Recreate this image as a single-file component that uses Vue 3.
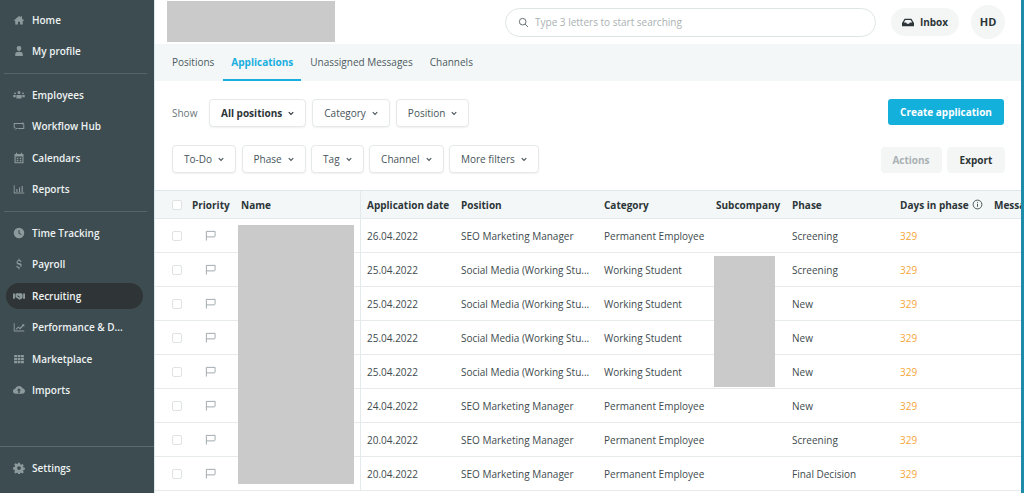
<script setup>
const topNav = [
  { label: 'Home', icon: 'home' },
  { label: 'My profile', icon: 'user' }
]
const midNav = [
  { label: 'Employees', icon: 'people' },
  { label: 'Workflow Hub', icon: 'hub' },
  { label: 'Calendars', icon: 'calendar' },
  { label: 'Reports', icon: 'chart' }
]
const lowNav = [
  { label: 'Time Tracking', icon: 'clock' },
  { label: 'Payroll', icon: 'dollar' },
  { label: 'Recruiting', icon: 'shake', active: true },
  { label: 'Performance & D...', icon: 'perf' },
  { label: 'Marketplace', icon: 'grid' },
  { label: 'Imports', icon: 'cloud' }
]
const tabs = ['Positions', 'Applications', 'Unassigned Messages', 'Channels']
const showFilters = ['All positions', 'Category', 'Position']
const moreFilters = ['To-Do', 'Phase', 'Tag', 'Channel', 'More filters']

const seo = 'SEO Marketing Manager'
const social = 'Social Media (Working Stu...'
const perm = 'Permanent Employee'
const student = 'Working Student'
const rows = [
  { date: '26.04.2022', position: seo, category: perm, phase: 'Screening' },
  { date: '25.04.2022', position: social, category: student, phase: 'Screening' },
  { date: '25.04.2022', position: social, category: student, phase: 'New' },
  { date: '25.04.2022', position: social, category: student, phase: 'New' },
  { date: '25.04.2022', position: social, category: student, phase: 'New' },
  { date: '24.04.2022', position: seo, category: perm, phase: 'New' },
  { date: '20.04.2022', position: seo, category: perm, phase: 'Screening' },
  { date: '20.04.2022', position: seo, category: perm, phase: 'Final Decision' }
]
</script>

<template>
  <div class="page">
    <aside class="sidebar">
      <div class="nav-scroll">
        <template v-for="(group, i) in [topNav, midNav, lowNav]" :key="i">
          <div class="nav-group" :class="{ first: i === 0 }">
            <div v-for="item in group" :key="item.label" class="nav-item" :class="{ active: item.active }">
              <svg class="nav-icon" viewBox="0 0 16 16" fill="currentColor">
                <path v-if="item.icon === 'home'" d="M8 2.500 1 8.500l.8.800L3 8.300V14h3.600v-3.600h2.800V14H13V8.300l1.200 1 .8-.8-3-2.600V3h-1.800v1.400z" />
                <path v-else-if="item.icon === 'user'" d="M8 1.500a3 3 0 0 1 3 3.200C11 6.600 9.700 8 8 8S5 6.600 5 4.700A3 3 0 0 1 8 1.500zM3 14.500v-2.600C3 10 5 9 8 9s5 1 5 2.900v2.600z" />
                <path v-else-if="item.icon === 'people'" d="M8 2.500a2 2 0 1 1 0 4 2 2 0 0 1 0-4zM4.500 8h7v4.500h-7zM2.700 4.500a1.300 1.300 0 1 1 0 2.600 1.300 1.300 0 0 1 0-2.600zM13.300 4.500a1.300 1.300 0 1 1 0 2.600 1.300 1.300 0 0 1 0-2.600zM.3 8h3.300v3H.3zM12.400 8h3.300v3h-3.300z" />
                <path v-else-if="item.icon === 'hub'" d="M1 4h12v1.300H2.300v5.400H6V12H1zM15 12H6.800v-1.300h6.900V5.500H15zM12.500 2.800 15 4.600l-2.500 1.800zM3.500 9.600 1 11.400l2.500 1.800z" />
                <path v-else-if="item.icon === 'calendar'" fill-rule="evenodd" d="M4 1h1.500v1.500h5V1H12v1.500h2V15H2V2.500h2zM3.500 6v7.500h9V6zM5 7.500h2v2H5zM9 7.500h2v2H9zM5 10.500h2v2H5zM9 10.500h2v2H9z" />
                <path v-else-if="item.icon === 'chart'" d="M1 3h1.200v9.800H15V14H1zM4.500 8H6v4H4.500zM8 6h1.500v6H8zM11.500 4H13v8h-1.500z" />
                <path v-else-if="item.icon === 'clock'" fill-rule="evenodd" d="M8 1a7 7 0 1 1 0 14A7 7 0 0 1 8 1zM7.300 4v4.600l3.400 2 .7-1.100-2.700-1.600V4z" />
                <path v-else-if="item.icon === 'dollar'" d="M7.300 1h1.400v1.600c1.400.2 2.500 1 2.800 2.400l-1.500.3c-.2-.8-.9-1.300-1.900-1.300-1.200 0-1.900.5-1.900 1.300 0 .8.700 1.100 2 1.400 1.800.4 3.400 1 3.400 2.900 0 1.500-1.100 2.500-2.900 2.700V15H7.300v-1.700c-1.600-.2-2.800-1.100-3.100-2.600l1.500-.3c.3 1 1.100 1.500 2.300 1.500 1.300 0 2.100-.5 2.100-1.400 0-.9-.8-1.200-2.100-1.500C6.300 8.600 4.700 8 4.700 6.100c0-1.800 1.100-3.100 2.600-3.500z" />
                <path v-else-if="item.icon === 'shake'" d="M0 4.500h2.500v7H0zM13.500 4.500H16v7h-2.500zM3.300 5.200 6 4l2 .8L10 4l2.700 1.200v5.300L9 13l-1.300-.6-3-2.200-1.400-.5zM6.500 7 5.700 8l2.800 2.200.8-.8z" />
                <path v-else-if="item.icon === 'perf'" d="M1 3h1.200v9.800H15V14H1zM3.500 10.600 7 7.400l2.200 1.700 3.500-3.700-1-1h3.300v3.300l-1.100-1.100-4.600 4.800L7 9.100l-2.600 2.400z" />
                <path v-else-if="item.icon === 'grid'" d="M1.500 2.500h3.800v3.200H1.500zM6.100 2.500h3.800v3.200H6.100zM10.700 2.500h3.800v3.200h-3.800zM1.500 6.500h3.800v3.200H1.500zM6.100 6.500h3.800v3.200H6.100zM10.700 6.500h3.800v3.200h-3.800zM1.500 10.500h3.800v3.200H1.500zM6.100 10.500h3.800v3.200H6.100zM10.700 10.500h3.800v3.200h-3.800z" />
                <path v-else-if="item.icon === 'cloud'" fill-rule="evenodd" d="M8.500 2.500c2 0 3.600 1.300 4 3.200 2 .2 3.500 1.700 3.500 3.700 0 2.200-1.700 3.600-3.800 3.600H3.500C1.500 13 0 11.600 0 9.600c0-1.800 1.200-3.100 2.900-3.400.6-2.200 2.900-3.700 5.600-3.700zM8 5.500 5 8.800h2V12h2V8.800h2z" />
              </svg>
              <span>{{ item.label }}</span>
            </div>
          </div>
        </template>
      </div>
      <div class="nav-bottom">
        <div class="nav-item">
          <svg class="nav-icon" viewBox="0 0 16 16" fill="currentColor" fill-rule="evenodd">
            <path d="M6.800 1h2.400l.4 2 1.300.6 1.800-1.100 1.700 1.700-1.100 1.800.6 1.300 2 .4v2.400l-2 .4-.6 1.300 1.100 1.800-1.700 1.700-1.800-1.100-1.300.6-.4 2H6.800l-.4-2-1.300-.6-1.800 1.100-1.700-1.700 1.100-1.800-.6-1.300-2-.4V6.900l2-.4.6-1.300-1.100-1.800 1.700-1.700 1.800 1.100 1.300-.6zM8 5.500a2.500 2.500 0 1 0 0 5 2.500 2.500 0 0 0 0-5z" />
          </svg>
          <span>Settings</span>
        </div>
      </div>
    </aside>

    <main class="main">
      <header class="topbar">
        <div class="logo-mask"></div>
        <div class="search">
          <svg class="search-icon" viewBox="0 0 16 16" fill="none" stroke="currentColor" stroke-width="1.400">
            <circle cx="6.800" cy="6.800" r="4.800" />
            <path d="m10.300 10.300 4.200 4.200" />
          </svg>
          <span>Type 3 letters to start searching</span>
        </div>
        <button class="inbox">
          <svg viewBox="0 0 16 12" fill="currentColor" width="12" height="9">
            <path d="M3.500 1h9L16 6.500V11H0V6.500zM4.500 2.500 2.300 6H5.500l1 1.500h3l1-1.500h3.200l-2.200-3.500z" fill-rule="evenodd" />
          </svg>
          Inbox
        </button>
        <div class="avatar">HD</div>
      </header>

      <nav class="tabs">
        <span v-for="tab in tabs" :key="tab" class="tab" :class="{ current: tab === 'Applications' }">{{ tab }}</span>
      </nav>

      <section class="filters">
        <div class="filter-row first">
          <span class="show">Show</span>
          <button v-for="f in showFilters" :key="f" class="select" :class="{ strong: f === 'All positions' }">
            {{ f }}
            <svg class="chev" viewBox="0 0 8 6" fill="none" stroke="currentColor" stroke-width="1.500"><path d="m1 1.300 3 3 3-3" /></svg>
          </button>
          <button class="create">Create application</button>
        </div>
        <div class="filter-row second">
          <button v-for="f in moreFilters" :key="f" class="select">
            {{ f }}
            <svg class="chev" viewBox="0 0 8 6" fill="none" stroke="currentColor" stroke-width="1.500"><path d="m1 1.300 3 3 3-3" /></svg>
          </button>
          <button class="ghost disabled">Actions</button>
          <button class="ghost export">Export</button>
        </div>
      </section>

      <section class="table">
        <div class="row head">
          <div class="cell check"><i class="box"></i></div>
          <div class="cell priority">Priority</div>
          <div class="cell name">Name</div>
          <div class="cell date">Application date</div>
          <div class="cell position">Position</div>
          <div class="cell category">Category</div>
          <div class="cell sub">Subcompany</div>
          <div class="cell phase">Phase</div>
          <div class="cell days">
            Days in phase
            <svg class="info" viewBox="0 0 12 12" fill="none" stroke="currentColor"><circle cx="6" cy="6" r="4.800" /><path d="M6 5.200v3.300M6 3.200v1" /></svg>
          </div>
          <div class="cell msg">Messages</div>
        </div>
        <div v-for="(row, i) in rows" :key="i" class="row">
          <div class="cell check"><i class="box"></i></div>
          <div class="cell priority">
            <svg class="flag" viewBox="0 0 12 12" fill="none" stroke="currentColor"><path d="M1.500 11.500V1.500h9.500v5c0 .6-.4 1-1 1H1.500" /></svg>
          </div>
          <div class="cell name"></div>
          <div class="cell date">{{ row.date }}</div>
          <div class="cell position">{{ row.position }}</div>
          <div class="cell category">{{ row.category }}</div>
          <div class="cell sub"></div>
          <div class="cell phase">{{ row.phase }}</div>
          <div class="cell days count">329</div>
          <div class="cell msg"></div>
        </div>
        <div class="mask mask-name"></div>
        <div class="mask mask-sub"></div>
      </section>
    </main>
  </div>
</template>

<style>
html, body {
  margin: 0;
  overflow: hidden;
  background: #fff;
}
</style>

<style scoped>
.page {
  display: flex;
  width: 1024px;
  height: 493px;
  overflow: hidden;
  font-family: "Open Sans", "Noto Sans", sans-serif;
  font-size: 10px;
  color: #3e4a4e;
}

.sidebar {
  width: 155px;
  flex: none;
  display: flex;
  flex-direction: column;
  justify-content: space-between;
  background: #3c4c50;
  border-right: 1px solid #d9e9ee;
  box-sizing: border-box;
}

.nav-group {
  display: flex;
  flex-direction: column;
  margin: 0 7px 0 4px;
  padding: 8px 0 3.300px;
  border-bottom: 1px solid #556569;
}

.nav-group.first {
  padding-top: 7px;
}

.nav-group:last-child {
  border-bottom: 0;
}

.nav-item {
  height: 26px;
  margin-bottom: 5.400px;
  display: flex;
  align-items: center;
  gap: 7px;
  padding-left: 9px;
  border-radius: 13px;
  color: #eef2f3;
  font-weight: 600;
}

.nav-item .nav-icon {
  width: 12px;
  height: 12px;
  flex: none;
  color: #8d9a9d;
}

.nav-item.active {
  background: #2f3536;
  margin: 0 4px 5.400px 2px;
  padding-left: 7px;
}

.nav-bottom {
  border-top: 1px solid #5a6a6e;
  padding: 8px 7px 12px 4px;
}

.nav-bottom .nav-item {
  margin-bottom: 0;
}

.main {
  flex: 1;
  min-width: 0;
  display: flex;
  flex-direction: column;
  border-right: 3px solid #1f8bab;
}

.topbar {
  height: 44px;
  flex: none;
  display: flex;
  align-items: center;
  padding-left: 12px;
  background: #fff;
}

.logo-mask {
  width: 168px;
  height: 41px;
  margin-top: 1px;
  background: #cacaca;
  align-self: flex-start;
}

.search {
  margin-left: 170px;
  width: 371px;
  height: 29px;
  box-sizing: border-box;
  border: 1px solid #dfe4e5;
  border-radius: 15px;
  display: flex;
  align-items: center;
  gap: 6px;
  padding-left: 12px;
  color: #a9b1b3;
}

.search-icon {
  width: 11px;
  height: 11px;
  color: #5f6b6e;
}

.inbox {
  margin-left: 15px;
  width: 68px;
  height: 28px;
  border: 0;
  border-radius: 14px;
  background: #f4f6f6;
  font: 700 10px "Open Sans", sans-serif;
  color: #2c3537;
  display: flex;
  align-items: center;
  justify-content: center;
  gap: 6px;
  padding: 0;
}

.avatar {
  margin-left: 12px;
  width: 34px;
  height: 34px;
  box-sizing: border-box;
  padding-bottom: 2px;
  border-radius: 50%;
  background: #f4f6f6;
  font-weight: 700;
  font-size: 11px;
  color: #2c3537;
  display: flex;
  align-items: center;
  justify-content: center;
}

.tabs {
  height: 37px;
  flex: none;
  display: flex;
  gap: 1px;
  background: #f3f7f8;
  padding-left: 9px;
  box-sizing: border-box;
}

.tab {
  padding: 0 8px;
  display: flex;
  align-items: center;
  color: #4d5a5e;
  border-bottom: 2px solid transparent;
  box-sizing: border-box;
}

.tab.current {
  color: #19aede;
  font-weight: 700;
  border-bottom-color: #19aede;
}

.filters {
  height: 109px;
  flex: none;
  padding: 18px 17px 0 17px;
  box-sizing: border-box;
}

.filter-row {
  display: flex;
  align-items: center;
  gap: 6px;
}

.filter-row.second {
  margin-top: 18px;
  gap: 5.500px;
}

.show {
  color: #6b7679;
  margin-right: 6px;
  width: 25px;
}

.select {
  height: 28px;
  padding: 0 11px;
  border: 1px solid #e6e9ea;
  border-radius: 4px;
  background: #fff;
  box-shadow: 0 1px 2px rgba(0, 0, 0, 0.06);
  font: 400 10px "Open Sans", sans-serif;
  color: #47545a;
  display: flex;
  align-items: center;
  gap: 6px;
}

.select.strong {
  font-weight: 700;
  color: #2c3537;
}

.chev {
  width: 6px;
  height: 5px;
}

.create {
  margin-left: auto;
  align-self: flex-start;
  width: 116px;
  height: 26px;
  border: 0;
  border-radius: 3px;
  background: #14b0dc;
  color: #fff;
  font: 700 10px "Open Sans", sans-serif;
  padding: 0;
}

.ghost {
  width: 58px;
  height: 26px;
  align-self: flex-end;
  border: 0;
  border-radius: 4px;
  background: #f4f6f6;
  color: #2c3537;
  font: 700 10px "Open Sans", sans-serif;
  padding: 0;
}

.ghost.disabled {
  margin-left: auto;
  width: 61px;
  color: #a9b1b3;
}

.ghost.export {
  margin-right: -1px;
}

.table {
  position: relative;
  flex: 1;
  min-height: 0;
  overflow: hidden;
  border-top: 1px solid #dfe7ea;
}

.row {
  display: grid;
  grid-template-columns: 37px 49px 120px 100px 143px 112px 76px 108px 94px 60px;
  height: 34px;
  border-bottom: 1px solid #e6eaeb;
  box-sizing: border-box;
}

.row.head {
  height: 28px;
  background: #f3f7f8;
  font-weight: 700;
  color: #2c3537;
  border-bottom-color: #e4eaec;
}

.cell {
  display: flex;
  align-items: center;
  white-space: nowrap;
  min-width: 0;
}

.check {
  justify-content: center;
  padding-left: 6px;
  box-sizing: border-box;
}

.box {
  width: 8px;
  height: 8px;
  border: 1px solid #dfe3e4;
  border-radius: 2px;
  background: #fff;
}

.row:not(.head) .priority {
  padding-left: 13px;
}

.flag {
  width: 11px;
  height: 11px;
  color: #9aa4a7;
}

.name {
  border-right: 1px solid #e4eaec;
  box-sizing: border-box;
}

.date {
  padding-left: 6px;
}

.info {
  width: 11px;
  height: 11px;
  margin-left: 3px;
  color: #3e4a4e;
}

.count {
  color: #f5a63a;
}

.mask {
  position: absolute;
  background: #cacaca;
}

.mask-name {
  left: 83px;
  top: 34px;
  width: 116px;
  height: 259px;
}

.mask-sub {
  left: 559px;
  top: 65px;
  width: 61px;
  height: 131px;
}
</style>
